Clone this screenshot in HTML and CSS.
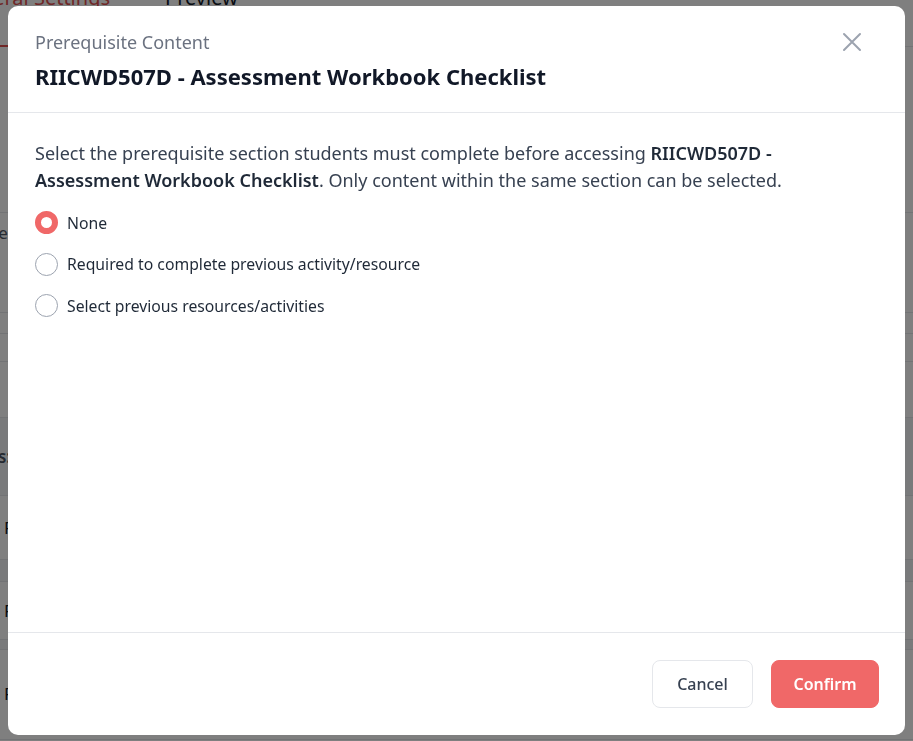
FILE: index.html
```html
<!DOCTYPE html>
<html lang="en">
<head>
<meta charset="utf-8">
<title>Prerequisite Content</title>
<link rel="stylesheet" href="styles.css">
</head>
<body>
<div class="page">
  <div class="tabs">
    <span class="tab active">General Settings</span>
    <span class="tab">Preview</span>
  </div>
  <div class="rows">
    <div class="row h166"></div>
    <div class="row h100 top"><span class="cut-e">Type</span></div>
    <div class="row h21"></div>
    <div class="row h28"></div>
    <div class="row h56"></div>
    <div class="row h78 shaded"><span class="cut-s">Class:</span></div>
    <div class="row h64"><span class="f">F</span></div>
    <div class="row h22 shaded"></div>
    <div class="row h58"><span class="f">F</span></div>
    <div class="row h10 shaded"></div>
    <div class="row h90 f-top"><span class="f">F</span></div>
  </div>
</div>
<div class="overlay">
  <div class="modal">
    <header class="modal-header">
      <div class="heading">
        <div class="subtitle">Prerequisite Content</div>
        <h1 class="title">RIICWD507D - Assessment Workbook Checklist</h1>
      </div>
      <button class="close" aria-label="Close">
        <svg width="20" height="20" viewBox="0 0 20 20"><path d="M2 2 L18 18 M18 2 L2 18" stroke="#9ca3af" stroke-width="2" stroke-linecap="round" fill="none"/></svg>
      </button>
    </header>
    <section class="modal-body">
      <p class="intro">Select the prerequisite section students must complete before accessing <strong>RIICWD507D - Assessment Workbook Checklist</strong>. Only content within the same section can be selected.</p>
      <div class="options">
        <label class="option"><span class="radio checked"></span><span>None</span></label>
        <label class="option"><span class="radio"></span><span>Required to complete previous activity/resource</span></label>
        <label class="option"><span class="radio"></span><span>Select previous resources/activities</span></label>
      </div>
    </section>
    <footer class="modal-footer">
      <button class="btn btn-cancel">Cancel</button>
      <button class="btn btn-confirm">Confirm</button>
    </footer>
  </div>
</div>
</body>
</html>
```

FILE: styles.css
```css
* { box-sizing: border-box; }
html, body { margin: 0; padding: 0; height: 100%; }
body {
  font-family: "Noto Sans", "Open Sans", sans-serif;
  background: #ffffff;
  overflow: hidden;
  position: relative;
}
.page {
  height: 100%;
  background: #ffffff;
  overflow: hidden;
}
.tabs {
  display: flex;
  gap: 55px;
  height: 63px;
  border-bottom: 1px solid #e5e7eb;
  margin-left: -45px;
  margin-top: -16px;
  align-items: flex-start;
}
.tab {
  font-size: 20px;
  line-height: 28px;
  color: #111827;
  padding-bottom: 33px;
  white-space: nowrap;
}
.tab.active {
  color: #e04f4f;
  border-bottom: 2px solid #e04f4f;
}
.rows { display: flex; flex-direction: column; }
.row {
  border-bottom: 1px solid #e5e7eb;
  font-size: 17px;
  color: #111827;
  display: flex;
  align-items: center;
  white-space: nowrap;
  overflow: hidden;
}
.row.top { align-items: flex-start; padding-top: 8px; }
.row.f-top { align-items: flex-start; padding-top: 32px; }
.h166 { height: 166px; }
.h100 { height: 100px; }
.h21 { height: 21px; }
.h28 { height: 28px; }
.h56 { height: 56px; }
.h78 { height: 78px; }
.h64 { height: 64px; }
.h22 { height: 22px; }
.h58 { height: 58px; }
.h10 { height: 10px; }
.h90 { height: 90px; }
.shaded { background: #f3f4f6; }
.cut-e { margin-left: -30px; color: #4b5563; }
.cut-s { margin-left: -36px; color: #4b5563; font-weight: 600; }
.f { margin-left: 4px; }
.overlay {
  position: fixed;
  inset: 0;
  background: rgba(0, 0, 0, 0.5);
  padding: 6px 8px 6px 8px;
  display: flex;
}
.modal {
  flex: 1;
  background: #ffffff;
  border-radius: 10px;
  display: flex;
  flex-direction: column;
  overflow: hidden;
}
.modal-header {
  display: flex;
  justify-content: space-between;
  align-items: flex-start;
  padding: 24px 27px 20px 27px;
  border-bottom: 1px solid #e5e7eb;
}
.subtitle {
  font-size: 18px;
  line-height: 24px;
  color: #6b7280;
}
.title {
  margin: 6px 0 0 0;
  font-size: 22px;
  line-height: 32px;
  font-weight: 700;
  color: #111827;
}
.close {
  background: none;
  border: 0;
  padding: 0;
  margin: 2px 16px 0 0;
  width: 20px;
  height: 20px;
  cursor: pointer;
}
.close svg { display: block; }
.modal-body {
  flex: 1;
  padding: 27px 27px 24px 27px;
}
.intro {
  margin: 0;
  font-size: 18px;
  line-height: 27px;
  color: #374151;
}
.intro strong { color: #1f2937; font-weight: 600; }
.options {
  display: flex;
  flex-direction: column;
  margin-top: 8px;
}
.option {
  display: flex;
  align-items: center;
  gap: 9px;
  height: 41.5px;
  font-size: 15.75px;
  color: #1f2937;
}
.radio {
  width: 23px;
  height: 23px;
  border-radius: 50%;
  border: 1px solid #9ca3af;
  background: #fff;
  flex: none;
}
.radio.checked {
  border: 6px solid #f06868;
}
.modal-footer {
  display: flex;
  justify-content: flex-end;
  gap: 18px;
  padding: 27px 26px 27px 27px;
  border-top: 1px solid #e5e7eb;
}
.btn {
  height: 48px;
  border-radius: 8px;
  font-family: inherit;
  font-size: 16px;
  font-weight: 500;
  padding: 0 20px;
  cursor: pointer;
}
.btn-cancel {
  width: 101px;
  background: #ffffff;
  border: 1px solid #e5e7eb;
  color: #374151;
}
.btn-confirm {
  width: 108px;
  background: #f06868;
  border: 1px solid #f06868;
  color: #ffffff;
  font-weight: 600;
}
```
